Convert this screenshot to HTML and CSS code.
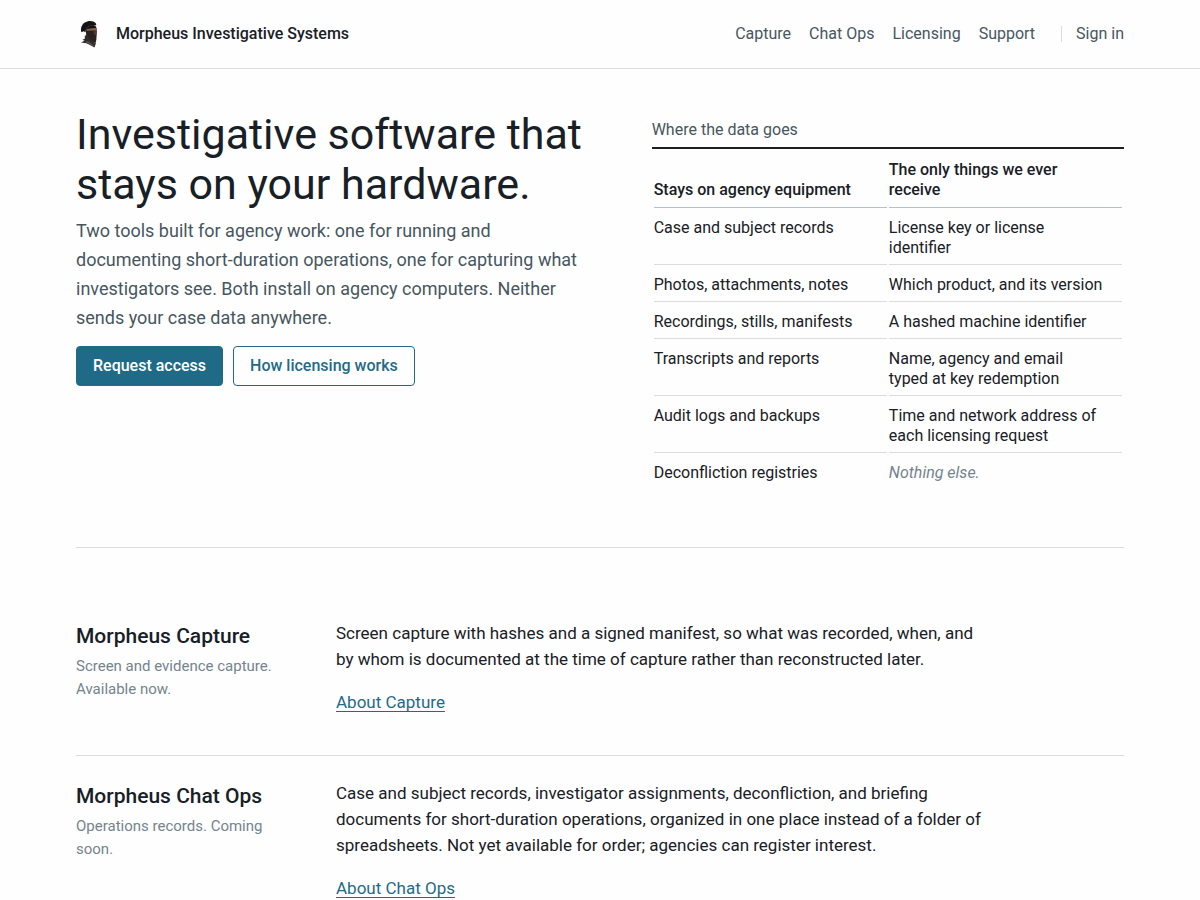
FILE: index.html
```html
<!DOCTYPE html>
<html lang="en">
<head>
<meta charset="utf-8">
<meta name="viewport" content="width=device-width, initial-scale=1">
<title>Morpheus Investigative Systems</title>
<link rel="stylesheet" href="styles.css">
</head>
<body>
<header class="site-header">
  <div class="wrap header-row">
    <a class="brand" href="#">
      <svg class="brand-mark" viewBox="0 0 28 28" aria-hidden="true">
        <path fill="#141416" d="M5.400 12.300C4.300 8.600 5.700 4.600 8.800 2.600C12.200.4 17.200.4 19.800 3.200L20.400 5.600C17.500 4.800 14.600 5 12.600 6.300C10.400 7.800 9.700 9.600 9.500 12.200L7.600 11.300Z"/>
        <path fill="#2a2220" d="M9.800 10.500C10.400 7 13.700 5 17.200 5.200C19.600 5.600 20.800 7.600 20.800 10.300L20.400 19.500L19.600 23L15.500 22L10.500 19L10.200 15Z"/>
        <path fill="#141416" d="M9.800 10.500C10.400 7 13.400 5 17 5.200C19 5.500 20.200 6.500 20.500 7.700L11 8.900Z"/>
        <path fill="#84634f" d="M10.600 9.100L20.200 8L21.200 9.400L20.800 10.500L16.500 10.400L10.800 10.800Z"/>
        <path fill="#543b30" d="M17.400 11.300L20.800 11L20.400 15.500L18.500 14.800Z"/>
        <path fill="#2f2c2b" d="M8.800 15.500L11.600 15.200L13.500 19L17.300 22L19.900 23.200L18.500 27.500L13.500 24.800L10.300 23.200L5 22.600L8.500 20.800L6.500 19.800L8.800 18.700Z"/>
        <path fill="#5c5855" d="M8.800 21.700L12 21.500L17.800 25.200L17.300 26L12.500 23.400Z"/>
      </svg>
      <span>Morpheus Investigative Systems</span>
    </a>
    <nav class="nav" aria-label="Main">
      <ul class="nav-list">
        <li><a href="#capture">Capture</a></li>
        <li><a href="#chat-ops">Chat Ops</a></li>
        <li><a href="#licensing">Licensing</a></li>
        <li><a href="#support">Support</a></li>
      </ul>
      <a class="sign-in" href="#sign-in">Sign in</a>
    </nav>
  </div>
</header>
<main class="wrap">
  <section class="hero">
    <div>
      <h1 class="hero-title">Investigative software that stays on your hardware.</h1>
      <p class="lead">Two tools built for agency work: one for running and documenting short-duration operations, one for capturing what investigators see. Both install on agency computers. Neither sends your case data anywhere.</p>
      <div class="actions">
        <a class="button button-primary" href="#request">Request access</a>
        <a class="button" href="#licensing">How licensing works</a>
      </div>
    </div>
    <table class="ledger">
      <caption>Where the data goes</caption>
      <thead>
        <tr><th scope="col">Stays on agency equipment</th><th scope="col">The only things we ever receive</th></tr>
      </thead>
      <tbody>
        <tr><td>Case and subject records</td><td>License key or license identifier</td></tr>
        <tr><td>Photos, attachments, notes</td><td>Which product, and its version</td></tr>
        <tr><td>Recordings, stills, manifests</td><td>A hashed machine identifier</td></tr>
        <tr><td>Transcripts and reports</td><td>Name, agency and email <br>typed at key redemption</td></tr>
        <tr><td>Audit logs and backups</td><td>Time and network address of each licensing request</td></tr>
        <tr><td>Deconfliction registries</td><td class="nothing">Nothing else.</td></tr>
      </tbody>
    </table>
  </section>
  <div class="products">
    <section class="product" id="capture">
      <div>
        <h2 class="product-title">Morpheus Capture</h2>
        <p class="product-note">Screen and evidence capture. Available now.</p>
      </div>
      <div class="product-body">
        <p>Screen capture with hashes and a signed manifest, so what was recorded, when, and by whom is documented at the time of capture rather than reconstructed later.</p>
        <p><a class="more" href="#about-capture">About Capture</a></p>
      </div>
    </section>
    <section class="product" id="chat-ops">
      <div>
        <h2 class="product-title">Morpheus Chat Ops</h2>
        <p class="product-note">Operations records. Coming soon.</p>
      </div>
      <div class="product-body">
        <p>Case and subject records, investigator assignments, deconfliction, and briefing documents for short-duration operations, organized in one place instead of a folder of spreadsheets. Not yet available for order; agencies can register interest.</p>
        <p><a class="more" href="#about-chat-ops">About Chat Ops</a></p>
      </div>
    </section>
  </div>
</main>
</body>
</html>
```
FILE: styles.css
```css
:root {
  --ink: #182026;
  --muted: #46565f;
  --faint: #74848e;
  --accent: #1f6b87;
  --line: #d9dddf;
  --line-strong: #b4c0c6;
}

* { box-sizing: border-box; }

body {
  margin: 0;
  background: #fefefe;
  color: var(--ink);
  font-family: Roboto, "Liberation Sans", sans-serif;
  font-size: 17px;
  line-height: 26px;
}

h1, h2, p, ul { margin: 0; padding: 0; }
a { color: inherit; text-decoration: none; }

.wrap {
  max-width: 1200px;
  margin: 0 auto;
  padding: 0 76px;
}

.site-header { border-bottom: 1px solid var(--line); }

.header-row {
  display: flex;
  align-items: center;
  justify-content: space-between;
  min-height: 68px;
}

.brand {
  display: flex;
  align-items: center;
  gap: 12px;
  font-size: 16px;
  font-weight: 500;
}

.brand-mark { width: 28px; height: 28px; }

.nav {
  display: flex;
  align-items: center;
  gap: 26px;
  color: var(--muted);
  font-size: 16px;
  line-height: 16px;
}

.nav-list {
  display: flex;
  gap: 18px;
  list-style: none;
}

.sign-in {
  padding-left: 14px;
  border-left: 1px solid var(--line);
}

.hero {
  display: grid;
  grid-template-columns: 13fr 12fr;
  gap: 64px;
  align-items: start;
  padding: 40px 0 56px;
  border-bottom: 1px solid var(--line);
}

.hero-title {
  font-size: 43px;
  font-weight: 400;
  line-height: 50px;
}

.lead {
  margin: 7px 0 14px;
  color: var(--muted);
  font-size: 18px;
  line-height: 29px;
}

.actions { display: flex; gap: 10px; }

.button {
  padding: 9px 16px;
  border: 1px solid var(--accent);
  border-radius: 4px;
  color: var(--accent);
  font-size: 16px;
  font-weight: 500;
  line-height: 20px;
}

.button-primary { background: var(--accent); color: #fefefe; }

.ledger {
  width: 100%;
  border-spacing: 2px;
  table-layout: fixed;
  font-size: 16px;
  line-height: 20px;
}

.ledger caption {
  padding: 11px 0 7px;
  border-bottom: 2px solid var(--ink);
  color: var(--muted);
  text-align: left;
}

.ledger th {
  padding: 9px 16px 7px 0;
  border-bottom: 1px solid var(--line-strong);
  font-weight: 500;
  text-align: left;
  vertical-align: bottom;
}

.ledger td {
  padding: 8px 16px 6px 0;
  border-bottom: 1px solid var(--line);
  vertical-align: top;
}

.ledger tbody tr:last-child td { border-bottom: 0; }
.ledger .nothing { color: var(--faint); font-style: italic; }

.products { padding-top: 48px; }

.product {
  display: grid;
  grid-template-columns: 220px 1fr;
  gap: 40px;
  padding: 24px 0 40px;
}

.product + .product {
  padding-bottom: 0;
  border-top: 1px solid var(--line);
}

.product-title {
  margin: 2px 0 5px;
  font-size: 21px;
  font-weight: 500;
  line-height: 28px;
}

.product-note {
  color: var(--faint);
  font-size: 15px;
  line-height: 23px;
}

.product-body { max-width: 652px; }
.product-body p + p { margin-top: 17px; }

.more {
  color: var(--accent);
  text-decoration: underline;
  text-decoration-thickness: 1px;
  text-underline-offset: 3px;
}
```
